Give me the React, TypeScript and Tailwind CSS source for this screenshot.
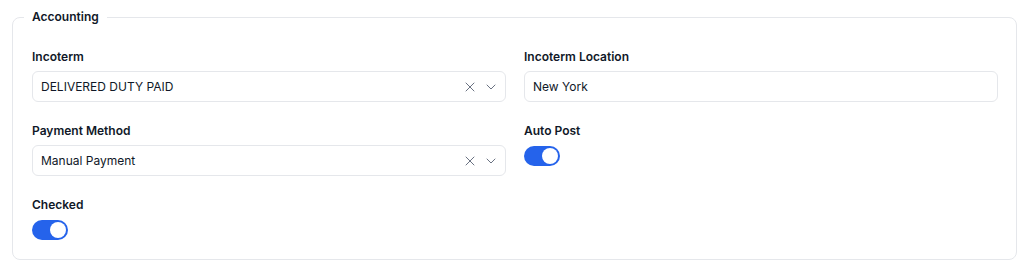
import { ChevronDown, X } from "lucide-react";

function SelectBox({ value }: { value: string }) {
  return (
    <div className="flex h-[31px] items-center rounded-md border border-gray-200 bg-white pl-2 pr-1.5">
      <span className="flex-1 truncate text-xs text-gray-900">{value}</span>
      <div className="flex items-center gap-[5px] text-gray-500">
        <X size={16} strokeWidth={1.5} />
        <ChevronDown size={16} strokeWidth={1.5} />
      </div>
    </div>
  );
}

function TextBox({ value }: { value: string }) {
  return (
    <div className="flex h-[31px] items-center rounded-md border border-gray-200 bg-white px-2">
      <span className="text-xs text-gray-900">{value}</span>
    </div>
  );
}

function Toggle({ on }: { on: boolean }) {
  return (
    <button
      type="button"
      className={
        "mt-px flex h-5 w-9 items-center rounded-full p-0.5 " +
        (on ? "justify-end bg-[#2563eb]" : "justify-start bg-gray-200")
      }
    >
      <span className="h-4 w-4 rounded-full bg-white" />
    </button>
  );
}

function Field({ label, children }: { label: string; children: React.ReactNode }) {
  return (
    <div className="flex flex-col items-start">
      <label className="mb-1.5 text-xs leading-4 font-semibold text-gray-900">{label}</label>
      <div className="w-full">{children}</div>
    </div>
  );
}

export default function App() {
  return (
    <div className="bg-white pt-[9px]" style={{ fontFamily: "Inter, 'Noto Sans', sans-serif" }}>
      <fieldset className="ml-3 w-[1005px] rounded-lg border border-gray-200 pt-6 pb-[19px] pl-[19px] pr-[18px]">
        <legend className="-ml-2 px-2 text-xs leading-4 font-semibold text-gray-900">Accounting</legend>
        <div className="grid grid-cols-2 gap-x-[18px] gap-y-[21px]">
          <Field label="Incoterm">
            <SelectBox value="DELIVERED DUTY PAID" />
          </Field>
          <Field label="Incoterm Location">
            <TextBox value="New York" />
          </Field>
          <Field label="Payment Method">
            <SelectBox value="Manual Payment" />
          </Field>
          <Field label="Auto Post">
            <Toggle on />
          </Field>
          <Field label="Checked">
            <Toggle on />
          </Field>
        </div>
      </fieldset>
    </div>
  );
}
